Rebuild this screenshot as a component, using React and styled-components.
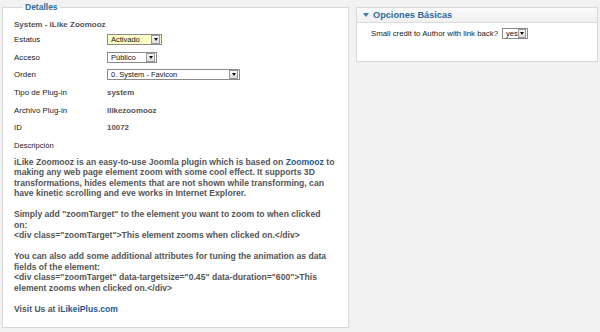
import React from "react";
import styled, { createGlobalStyle } from "styled-components";

const Global = createGlobalStyle`
  html, body {
    margin: 0;
    padding: 0;
    background: #f2f2f2;
    font-family: "Liberation Sans", Arial, sans-serif;
    color: #333;
  }
`;

const Page = styled.div`
  width: 600px;
  height: 332px;
  display: flex;
  align-items: flex-start;
  gap: 7px;
  padding: 0 2px 0 2px;
  box-sizing: border-box;
  overflow: hidden;
`;

const Fieldset = styled.fieldset`
  width: 347px;
  min-width: 0;
  height: 327px;
  flex-shrink: 0;
  box-sizing: border-box;
  margin: 1px 0 0 0;
  padding: 0 6px 0 11px;
  background: #fff;
  border: 1px solid #d8d8d8;
  legend {
    padding: 0 2px;
    margin-left: 9px;
    font-size: 8.5px;
    font-weight: bold;
    color: #2b6a9b;
    line-height: 12px;
  }
`;

const Heading = styled.div`
  font-size: 8px;
  font-weight: bold;
  color: #555;
  margin: 6px 0 1px 0;
  line-height: 11px;
`;

const Row = styled.div`
  display: grid;
  grid-template-columns: 93px 1fr;
  align-items: center;
  height: 17.6px;
  font-size: 7.9px;
`;

const Label = styled.span`
  color: #222;
`;

const Value = styled.span`
  font-weight: bold;
  color: #555;
`;

const Select = styled.div`
  display: flex;
  align-items: center;
  width: ${(p) => p.w}px;
  height: 11px;
  box-sizing: border-box;
  border: 1px solid #8a8a8a;
  background: ${(p) => (p.hl ? "#ffffc8" : "#fff")};
  font-size: 7.5px;
  color: #111;
  span {
    flex: 1;
    padding-left: 3px;
    white-space: nowrap;
  }
`;

const Arrow = styled.div`
  width: 9px;
  height: 9px;
  margin-right: 1px;
  box-sizing: border-box;
  border: 1px solid #999;
  background: linear-gradient(#fafafa, #ddd);
  display: flex;
  align-items: center;
  justify-content: center;
  &::after {
    content: "";
    border-left: 2px solid transparent;
    border-right: 2px solid transparent;
    border-top: 3px solid #111;
  }
`;

const DescLabel = styled.div`
  font-size: 7.6px;
  color: #222;
  margin: 4px 0 7px;
`;

const Desc = styled.div`
  width: 326px;
  font-size: 8.6px;
  font-weight: bold;
  color: #555;
  line-height: 10.5px;
  p {
    margin: 0 0 10.5px 0;
  }
  a {
    color: #1d5c8c;
    text-decoration: none;
  }
`;

const Panel = styled.div`
  width: 242px;
  height: 55px;
  margin-top: 7px;
  box-sizing: border-box;
  background: #fff;
  border: 1px solid #d8d8d8;
`;

const PanelHead = styled.div`
  height: 14px;
  display: flex;
  align-items: center;
  gap: 4px;
  padding-left: 6px;
  background: linear-gradient(#fbfbfb, #f0f0f0);
  border-bottom: 1px solid #dcdcdc;
  font-size: 9.2px;
  font-weight: bold;
  color: #2b6a9b;
  &::before {
    content: "";
    border-left: 3px solid transparent;
    border-right: 3px solid transparent;
    border-top: 4px solid #3b7cae;
  }
`;

const PanelBody = styled.div`
  display: flex;
  align-items: center;
  gap: 4px;
  padding: 5px 0 0 14px;
  font-size: 7.8px;
  color: #222;
`;

const Dropdown = ({ w, hl, children }) => (
  <Select w={w} hl={hl}>
    <span>{children}</span>
    <Arrow />
  </Select>
);

export default function App() {
  return (
    <Page>
      <Global />
      <Fieldset>
        <legend>Detalles</legend>
        <Heading>System - iLike Zoomooz</Heading>
        <Row>
          <Label>Estatus</Label>
          <Dropdown w={55} hl>Activado</Dropdown>
        </Row>
        <Row>
          <Label>Acceso</Label>
          <Dropdown w={50}>Público</Dropdown>
        </Row>
        <Row>
          <Label>Orden</Label>
          <Dropdown w={133}>0. System - Favicon</Dropdown>
        </Row>
        <Row>
          <Label>Tipo de Plug-in</Label>
          <Value>system</Value>
        </Row>
        <Row>
          <Label>Archivo Plug-in</Label>
          <Value>ilikezoomooz</Value>
        </Row>
        <Row>
          <Label>ID</Label>
          <Value>10072</Value>
        </Row>
        <DescLabel>Descripción</DescLabel>
        <Desc>
          <p>
            iLike Zoomooz is an easy-to-use Joomla plugin which is based on{" "}
            <a href="#">Zoomooz</a> to making any web page element zoom with
            some cool effect. It supports 3D transformations, hides elements
            that are not shown while transforming, can have kinetic scrolling
            and eve works in Internet Explorer.
          </p>
          <p>
            Simply add "zoomTarget" to the element you want to zoom to when clicked
            <br />
            on:
            <br />
            {'<div class="zoomTarget">This element zooms when clicked on.</div>'}
          </p>
          <p>
            You can also add some additional attributes for tuning the
            animation as data fields of the element:
            <br />
            {'<div class="zoomTarget" data-targetsize="0.45" data-duration="600">This element zooms when clicked on.</div>'}
          </p>
          <p>
            Visit Us at <a href="#">iLikeiPlus.com</a>
          </p>
        </Desc>
      </Fieldset>
      <Panel>
        <PanelHead>Opciones Básicas</PanelHead>
        <PanelBody>
          Small credit to Author with link back?
          <Dropdown w={26}>yes</Dropdown>
        </PanelBody>
      </Panel>
    </Page>
  );
}
